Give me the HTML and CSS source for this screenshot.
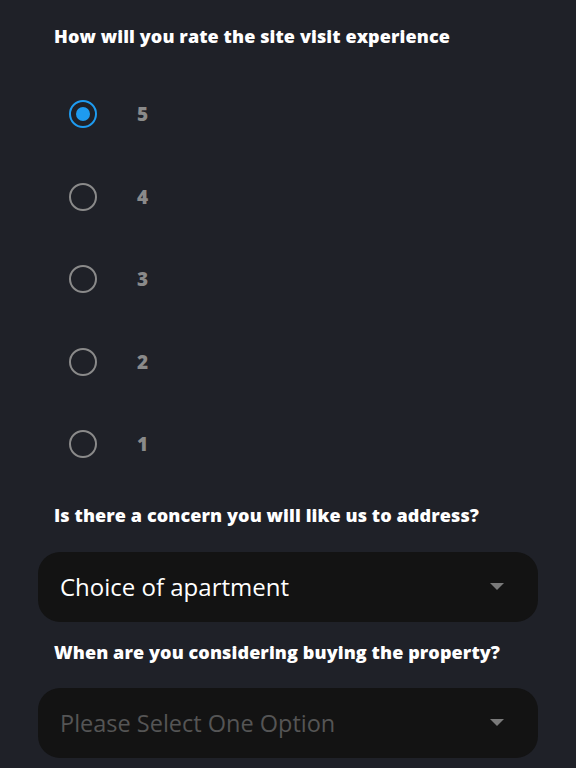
FILE: index.html
```html
<!DOCTYPE html>
<html>
<head>
<meta charset="utf-8">
<link rel="stylesheet" href="styles.css">
</head>
<body>
<div class="page">
  <h2 class="q q-first">How will you rate the site visit experience</h2>
  <div class="radios">
    <label class="radio"><span class="dot checked"></span><span class="rlabel">5</span></label>
    <label class="radio"><span class="dot"></span><span class="rlabel">4</span></label>
    <label class="radio"><span class="dot"></span><span class="rlabel">3</span></label>
    <label class="radio"><span class="dot"></span><span class="rlabel">2</span></label>
    <label class="radio"><span class="dot"></span><span class="rlabel">1</span></label>
  </div>
  <h2 class="q q-second">Is there a concern you will like us to address?</h2>
  <div class="select"><span class="value">Choice of apartment</span><span class="caret"></span></div>
  <h2 class="q q-third">When are you considering buying the property?</h2>
  <div class="select"><span class="value placeholder">Please Select One Option</span><span class="caret"></span></div>
</div>
</body>
</html>
```
FILE: styles.css
```css
html, body {
  margin: 0;
  padding: 0;
  background: #1f2128;
}
.page {
  width: 576px;
  height: 768px;
  overflow: hidden;
  font-family: "Open Sans", "Noto Sans", sans-serif;
  color: #fff;
}
.q {
  margin: 0;
  padding-left: 54px;
  font-size: 18px;
  font-weight: 800;
  line-height: 24px;
  letter-spacing: 0.1px;
}
.q-first { padding-top: 24px; }
.radios {
  display: flex;
  flex-direction: column;
  padding-top: 25px;
  padding-left: 69px;
}
.radio {
  display: flex;
  align-items: center;
  height: 82.5px;
}
.dot {
  box-sizing: border-box;
  width: 28px;
  height: 28px;
  border: 2.5px solid #8a8a8a;
  border-radius: 50%;
  display: flex;
  align-items: center;
  justify-content: center;
}
.dot.checked {
  border-color: #1e9bf0;
}
.dot.checked::after {
  content: "";
  width: 14px;
  height: 14px;
  border-radius: 50%;
  background: #1e9bf0;
}
.rlabel {
  margin-left: 40px;
  font-size: 19px;
  font-weight: 800;
  color: #8a8a8a;
}
.q-second { padding-top: 17px; }
.q-third { padding-top: 18px; }
.select {
  box-sizing: border-box;
  margin: 24px 0 0 38px;
  width: 500px;
  height: 70px;
  border-radius: 22px;
  background: #131313;
  display: flex;
  align-items: center;
  justify-content: space-between;
  padding: 0 34px 0 22px;
}
.q-second + .select { margin-top: 25px; }
.value {
  font-size: 24px;
  color: #fff;
  font-weight: 400;
}
.value.placeholder { color: #555; font-size: 23.5px; }
.caret {
  width: 0;
  height: 0;
  border-left: 7px solid transparent;
  border-right: 7px solid transparent;
  border-top: 7px solid #7a7a7a;
}
```
